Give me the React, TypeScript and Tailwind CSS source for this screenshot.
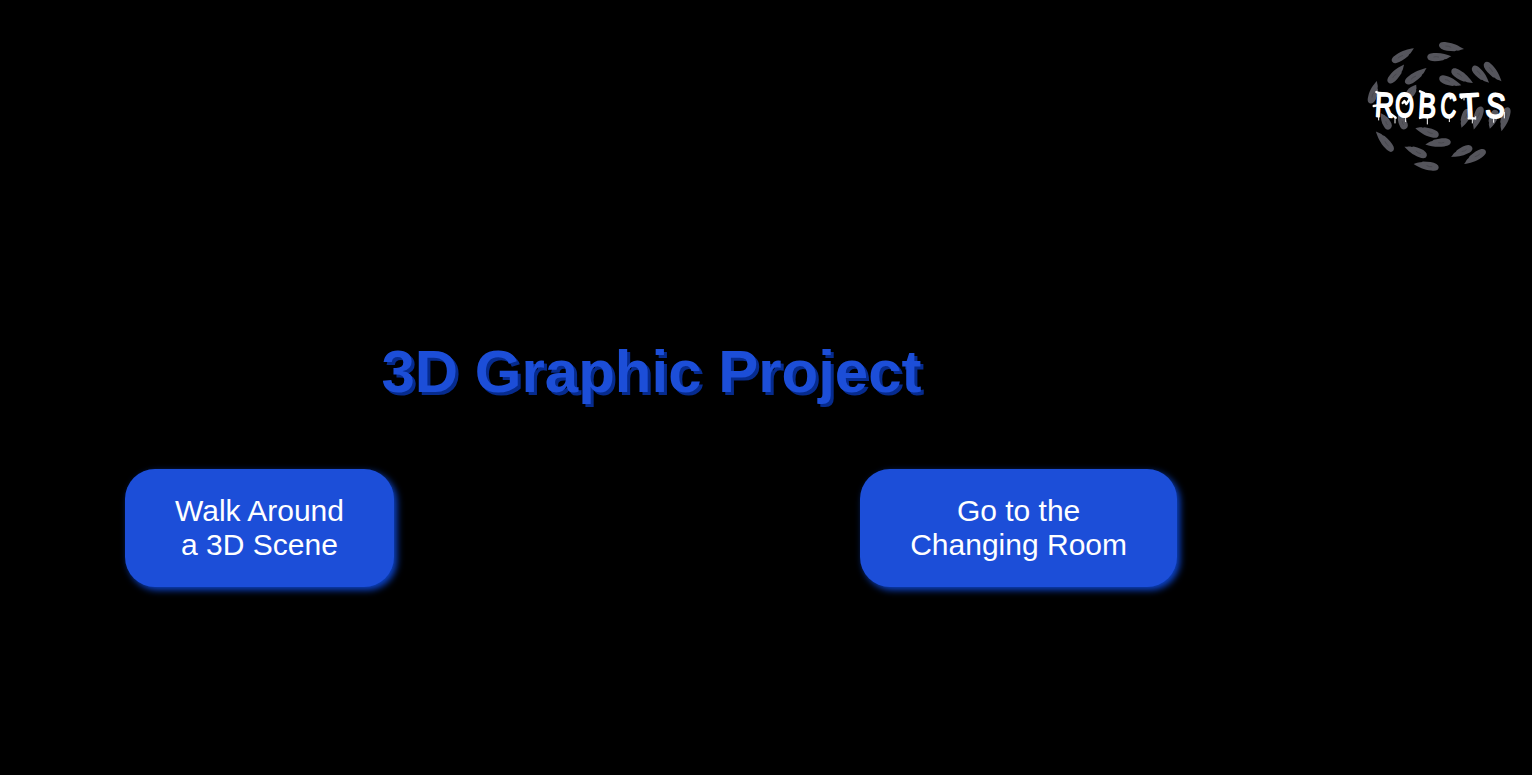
type Feather = [number, number, number, number];

// Each feather runs from its rounded base (x1, y1) to its pointed tip (x2, y2).
const feathers: Feather[] = [
  [97, 80, 160, 41], [237, 30, 310, 42], [202, 67, 272, 64], [86, 143, 131, 90],
  [137, 145, 198, 100], [238, 128, 302, 150], [275, 105, 337, 143], [338, 95, 386, 142],
  [374, 83, 423, 137], [31, 205, 50, 140], [144, 184, 168, 150], [90, 282, 63, 236],
  [137, 282, 115, 236], [99, 348, 49, 291], [236, 301, 168, 280], [272, 320, 198, 328],
  [200, 363, 135, 336], [236, 398, 163, 387], [336, 336, 275, 365], [376, 346, 314, 386],
  [364, 215, 342, 282], [326, 222, 305, 277], [444, 217, 425, 287], [408, 225, 390, 280],
];

// Wordmark letters: character, left edge, baseline, horizontal scale, rotation.
const letters: [string, number, number, number, number][] = [
  ["R", 48, 244, 0.76, 3],
  ["O", 110, 245, 0.7, 0],
  ["B", 178, 246, 0.78, 3],
  ["C", 244, 246, 0.64, 3],
  ["T", 308, 249, 0.92, -3],
  ["S", 379, 245, 0.84, 6],
];

function Logo() {
  return (
    <svg viewBox="0 0 480 435" className="h-[145px] w-40" role="img">
      {feathers.map(([x1, y1, x2, y2], i) => {
        const length = Math.hypot(x2 - x1, y2 - y1);
        const angle = (Math.atan2(y2 - y1, x2 - x1) * 180) / Math.PI;
        return (
          <g key={i} transform={`translate(${x1} ${y1}) rotate(${angle}) scale(${length / 72} 1)`}>
            <path d="M0 1C-1-8 7-12 20-12C42-13 58-7 74 0C64 4 61 8 53 8L48 11C32 13 18 14 8 10Q1 7 0 1Z" fill="#55555c" />
            <path d="M19 0L27-1L36 1" fill="none" stroke="#47474d" strokeWidth="2.5" />
          </g>
        );
      })}
      <g fill="none" stroke="#fff" strokeLinecap="round" strokeLinejoin="round">
        <path d="M41 213L52 211M49 171L62 178M180 169L192 174M180 249L190 246M272 190V182M305 189V182M326 250H343M128 204L133 198L139 207L150 191M94 238L107 248" strokeWidth="7" />
        <path d="M56 243V255M105 247V264M137 245V260M202 246V267M268 246V260M312 188V195M337 247V264M347 245V253M401 245V262M433 232V249" strokeWidth="3" />
      </g>
      <g
        fill="#fff"
        stroke="#fff"
        strokeWidth="6"
        strokeLinejoin="round"
        fontSize="103"
        className="font-['Liberation_Sans',sans-serif]"
      >
        {letters.map(([char, x, y, scale, angle]) => (
          <text key={char} transform={`translate(${x} ${y}) rotate(${angle}) scale(${scale} 1)`} x="-6">
            {char}
          </text>
        ))}
      </g>
    </svg>
  );
}

function SceneButton({ lines }: { lines: [string, string] }) {
  return (
    <button className="rounded-[30px] bg-[#1c4ed8] px-[50px] py-[25px] text-center text-[30px] leading-[34px] text-white shadow-[3px_3px_7px_#0d45cc]">
      {lines[0]}
      <br />
      {lines[1]}
    </button>
  );
}

export default function App() {
  return (
    <div className="flex h-[775px] w-full overflow-hidden bg-black font-['Liberation_Sans',Arial,sans-serif]">
      <main className="flex w-[1302px] shrink-0 flex-col pt-[337px]">
        <h1 className="pl-px text-center text-[60px] leading-[69px] font-bold text-[#1c4ed8] [text-shadow:3px_3px_0_#062b8e]">
          3D Graphic Project
        </h1>
        <div className="mt-[63px] flex justify-between px-[125px]">
          <SceneButton lines={["Walk Around", "a 3D Scene"]} />
          <SceneButton lines={["Go to the", "Changing Room"]} />
        </div>
      </main>
      <aside className="ml-[58px] shrink-0 pt-[35px]">
        <Logo />
      </aside>
    </div>
  );
}
